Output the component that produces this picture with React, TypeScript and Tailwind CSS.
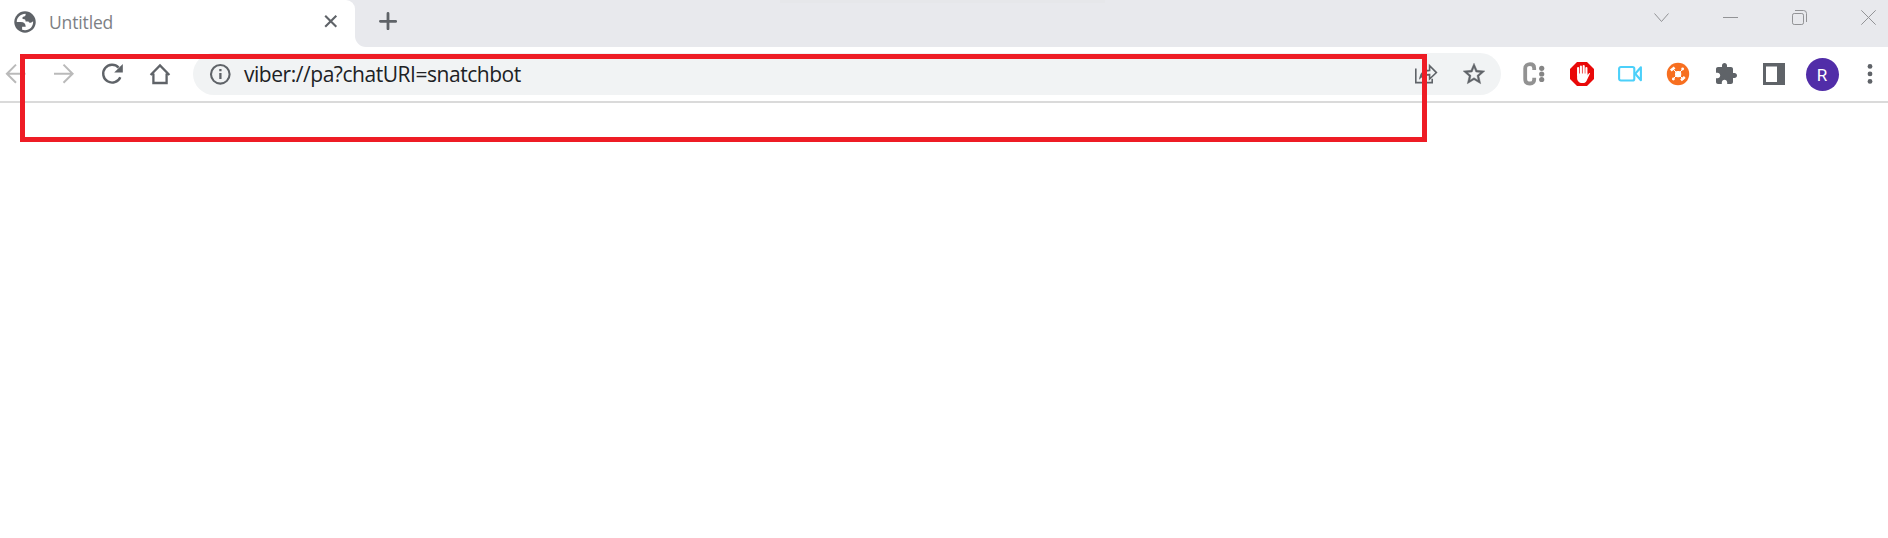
import type { ReactNode } from "react";

function Cell({ children, label }: { children: ReactNode; label: string }) {
  return (
    <button aria-label={label} className="flex h-[42px] w-12 shrink-0 items-center justify-center">
      {children}
    </button>
  );
}

function WindowButton({ children, label }: { children: ReactNode; label: string }) {
  return (
    <button aria-label={label} className="flex h-[35px] w-[69px] shrink-0 items-center justify-center text-[#929396]">
      {children}
    </button>
  );
}

function Globe() {
  return (
    <svg className="shrink-0" width="22" height="22" viewBox="0 0 16 16">
      <circle cx="8" cy="8" r="7.8" fill="#5f6368" />
      <path
        d="M2 8C2 4.7 4.7 2 8.4 2C8.8 3.2 8 4 6.6 4.2C6 4.4 6 5.7 6.5 5.9C8 5.9 8.5 6.5 8.4 7.7H10.5C11 8.9 12 9 13.9 7.5C14.2 11.2 11.5 14 8 14C7.3 14 6.6 13.9 5.9 13.7V11.4H8.5C8.5 9.2 7.4 8 4.9 8Z"
        fill="#fff"
      />
    </svg>
  );
}

function TabStrip() {
  return (
    <div className="flex h-[47px] bg-[#e8e9ed]">
      <div className="flex h-[47px] w-[355px] shrink-0 items-start rounded-tr-[9px] bg-white pt-[11px] pl-[14px]">
        <Globe />
        <span className="ml-[13px] h-[22px] w-[275px] shrink-0 font-['Open_Sans',sans-serif] text-[17.5px] leading-[22px] tracking-[-0.15px] text-[#7d8084]">
          Untitled
        </span>
        <svg className="mt-[3px] shrink-0" width="14" height="14" viewBox="0 0 14 14" fill="none" stroke="#5f6368" strokeWidth="2.1">
          <path d="M1.2 1.7L12.3 12.8M12.3 1.7L1.2 12.8" />
        </svg>
      </div>
      <div className="w-[11px] shrink-0 bg-white">
        <div className="h-full rounded-bl-[11px] bg-[#e8e9ed]" />
      </div>
      <button aria-label="New tab" className="mt-3 ml-[13px] h-[18px]">
        <svg width="18" height="18" viewBox="0 0 18 18" fill="none" stroke="#5f6368" strokeWidth="2.8" strokeLinecap="round">
          <path d="M9 1.4V16.8M1.4 9.3H16.7" />
        </svg>
      </button>
      <div className="mr-auto ml-[383px] h-[3px] w-[325px] bg-[#e6e7ea]" />
      <div className="-mr-[15px] flex">
        <WindowButton label="Search tabs">
          <svg width="17" height="17" viewBox="0 0 17 17" fill="none" stroke="currentColor">
            <path d="M1.5 4.5L8.5 12.5L15.5 4.5" />
          </svg>
        </WindowButton>
        <WindowButton label="Minimize">
          <svg width="15" height="15" viewBox="0 0 15 15" fill="none" stroke="currentColor">
            <path d="M0 7.5H15" />
          </svg>
        </WindowButton>
        <WindowButton label="Restore">
          <svg width="15" height="15" viewBox="0 0 15 15" fill="none" stroke="currentColor">
            <rect x=".5" y="3.5" width="11" height="11" rx="1.7" />
            <path d="M3 .5H11.5A3 3 0 0 1 14.5 3.5V12" />
          </svg>
        </WindowButton>
        <WindowButton label="Close">
          <svg width="15" height="15" viewBox="0 0 15 15" fill="none" stroke="currentColor">
            <path d="M.3 .3L14.7 14.7M14.7 .3L.3 14.7" />
          </svg>
        </WindowButton>
      </div>
    </div>
  );
}

function AddressBar() {
  return (
    <div className="ml-[9px] flex h-[42px] w-[1308px] shrink-0 items-center rounded-full bg-[#f1f3f4] px-[3px]">
      <Cell label="Site information">
        <svg width="22" height="22" viewBox="0 0 22 22" fill="none" stroke="#5f6368" strokeWidth="2.1">
          <circle cx="11.3" cy="11.3" r="9.3" />
          <path d="M11.4 10V16M11.4 6V8.2" strokeWidth="2.3" />
        </svg>
      </Cell>
      <span className="flex-1 pt-px font-['Open_Sans',sans-serif] text-[21px] leading-[41px] tracking-[-0.46px] whitespace-nowrap text-[#202124]">
        viber://pa?chatURI=snatchbot
      </span>
      <Cell label="Share">
        <svg width="24" height="24" viewBox="0 0 24 24" fill="none" stroke="#5f6368" strokeWidth="1.6">
          <path d="M1.8 6.5V20.6H18.2V16.8" />
          <path d="M6.2 15.6C7 10.8 9.6 8.6 15.6 8.4V3.7L22.4 10.6L15.6 17V12.6C11.3 12.5 8.7 13.2 6.2 15.6Z" />
        </svg>
      </Cell>
      <Cell label="Bookmark">
        <svg width="26" height="26" viewBox="0 0 24 24" fill="#5f6368" stroke="#5f6368" strokeWidth=".4">
          <path d="M22 9.24l-7.19-.62L12 2 9.19 8.63 2 9.24l5.46 4.73L5.82 21 12 17.27 18.18 21l-1.63-7.03L22 9.24zM12 15.4l-3.76 2.27 1-4.28-3.32-2.88 4.38-.38L12 6.1l1.71 4.04 4.38.38-3.32 2.88 1 4.28L12 15.4z" />
        </svg>
      </Cell>
    </div>
  );
}

function Extensions() {
  return (
    <div className="ml-[9px] flex shrink-0">
      <Cell label="Clip extension">
        <svg width="24" height="24" viewBox="0 0 24 24">
          <path d="M12.2 8V6.2C12.2 3.4 10.4 2.2 8 2.2S3.2 3.8 3.2 6.5V17C3.2 20 5.2 21.5 8 21.5S12.2 20.2 12.2 17.4V15.7" fill="none" stroke="#929292" strokeWidth="3.8" />
          <g fill="#858585">
            <circle cx="19.7" cy="6.3" r="2.6" />
            <circle cx="19.7" cy="12" r="2.6" />
            <circle cx="19.7" cy="17.5" r="2.6" />
          </g>
        </svg>
      </Cell>
      <Cell label="Ad blocker">
        <svg width="24" height="24" viewBox="0 0 24 24">
          <path d="M7 0H17L24 7V17L17 24H7L0 17V7Z" fill="#e90909" />
          <path
            d="M8.1 13V6.1M10.9 12V4.5M13.7 12V4.1M16.4 13V6.1"
            fill="none"
            stroke="#fff"
            strokeWidth="2.1"
            strokeLinecap="round"
          />
          <path d="M7.1 11.5H17.4V13.5L19 11.2C19.6 10.6 20.2 11.1 19.9 11.8L16.5 19C15.6 20.7 14.3 21 12.3 21C8.9 21 7.1 18.9 7.1 16Z" fill="#fff" />
        </svg>
      </Cell>
      <Cell label="Video recorder">
        <svg width="24" height="24" viewBox="0 0 24 24" fill="none" stroke="#4bd0fa" strokeWidth="2.1" strokeLinejoin="round">
          <rect x="1.1" y="5" width="15.2" height="13.5" rx="1.8" />
          <path d="M17.2 11.7L22.9 5.3V18.2Z" />
        </svg>
      </Cell>
      <Cell label="Network tool">
        <svg width="24" height="24" viewBox="0 0 24 24">
          <circle cx="12" cy="12" r="11.2" fill="#f76f20" />
          <path d="M6.5 6.5L17.5 17.5M17.5 6.5L6.5 17.5" stroke="#fff" strokeWidth="1" />
          <path d="M4.8 8.6L8.6 5.4M15 18.2L18.8 15" stroke="#fff" strokeWidth="2.6" />
          <rect x="9" y="9" width="6.2" height="6.2" rx="2.5" fill="#fff" />
          <circle cx="16.6" cy="7" r="1.4" fill="#fff" />
          <circle cx="7.4" cy="17" r="1.4" fill="#fff" />
        </svg>
      </Cell>
      <Cell label="Extensions">
        <svg width="24" height="24" viewBox="0 0 24 24" fill="#5f6368">
          <path d="M20.5 11H19V7c0-1.1-.9-2-2-2h-4V3.5C13 2.12 11.88 1 10.5 1S8 2.12 8 3.5V5H4c-1.1 0-1.99.9-1.99 2v3.8H3.5c1.49 0 2.7 1.21 2.7 2.7s-1.21 2.7-2.7 2.7H2V20c0 1.1.9 2 2 2h3.8v-1.5c0-1.49 1.21-2.7 2.7-2.7 1.49 0 2.7 1.21 2.7 2.7V22H17c1.1 0 2-.9 2-2v-4h1.5c1.38 0 2.5-1.12 2.5-2.5S21.88 11 20.5 11z" />
        </svg>
      </Cell>
      <Cell label="Side panel">
        <svg width="22" height="22" viewBox="0 0 22 22">
          <path fill="#5f6368" fillRule="evenodd" d="M0 0H22V22H0ZM3 3.4V19H14V3.4Z" />
        </svg>
      </Cell>
      <Cell label="Profile">
        <span className="flex size-[33px] items-center justify-center rounded-full bg-[#512da8] pt-0.5 font-['Roboto',sans-serif] text-[17px] leading-none text-white">
          R
        </span>
      </Cell>
      <Cell label="Menu">
        <svg width="6" height="22" viewBox="0 0 6 22" fill="#5f6368">
          <circle cx="3" cy="3.4" r="2.4" />
          <circle cx="3" cy="10.9" r="2.4" />
          <circle cx="3" cy="18.4" r="2.4" />
        </svg>
      </Cell>
    </div>
  );
}

function Toolbar() {
  return (
    <div className="-ml-2 flex h-[56px] border-b-2 border-[#dadada] bg-white pt-[6px]">
      <Cell label="Back">
        <svg width="22" height="22" viewBox="0 0 22 22" fill="none" stroke="#bababa" strokeWidth="2">
          <path d="M20.5 10.7H2M11 1.6L1.9 10.7L11 19.8" />
        </svg>
      </Cell>
      <Cell label="Forward">
        <svg width="22" height="22" viewBox="0 0 22 22" fill="none" stroke="#bababa" strokeWidth="2">
          <path d="M1 10.7H19.5M10.5 1.6L19.6 10.7L10.5 19.8" />
        </svg>
      </Cell>
      <Cell label="Reload">
        <svg width="22" height="22" viewBox="0 0 22 22">
          <path d="M17.6 4.6A8.9 8.9 0 1 0 19.3 14.2" fill="none" stroke="#5f6368" strokeWidth="2.4" />
          <path d="M21.8 1V9.6H13.2Z" fill="#5f6368" />
        </svg>
      </Cell>
      <Cell label="Home">
        <svg width="22" height="22" viewBox="0 0 22 22" fill="none" stroke="#5f6368" strokeWidth="2.3">
          <path d="M1.6 12L11 2.5L20.4 12M4.4 10.5V20H17.6V10.5" />
        </svg>
      </Cell>
      <AddressBar />
      <Extensions />
    </div>
  );
}

export default function App() {
  return (
    <div className="relative h-[538px] w-full overflow-hidden bg-white">
      <TabStrip />
      <Toolbar />
      <div className="pointer-events-none absolute top-[54px] left-5 h-[88px] w-[1407px] border-[5px] border-[#ee1c25]" />
    </div>
  );
}
